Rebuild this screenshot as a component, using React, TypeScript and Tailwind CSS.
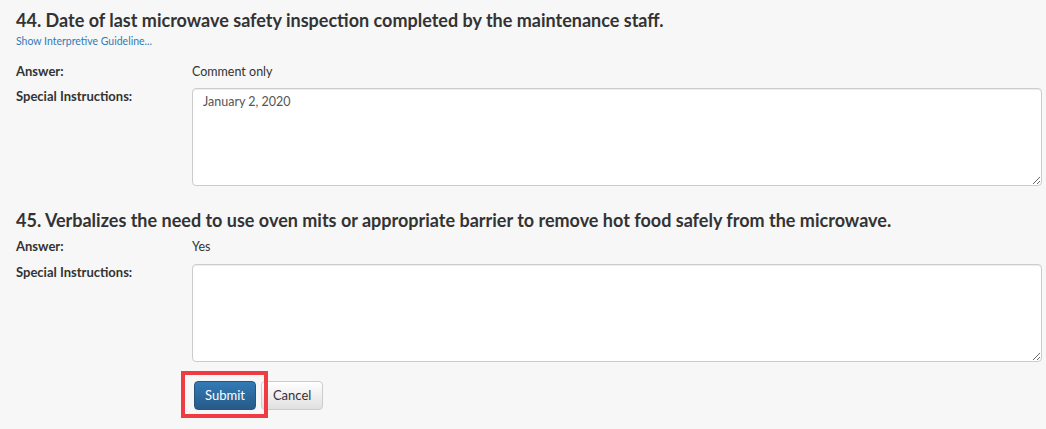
import React from 'react';

interface QuestionProps {
  number: number;
  title: string;
  answer: string;
  instructions?: string;
  showGuideline?: boolean;
  className?: string;
}

function Question({ number, title, answer, instructions = '', showGuideline, className = '' }: QuestionProps) {
  return (
    <div className={className}>
      <h2 className="text-[18px] leading-6 font-bold text-[#333]">
        {number}. {title}
      </h2>
      {showGuideline && (
        <a href="#" className="block mt-[2px] text-[10.5px] leading-[15px] text-[#337ab7]">
          Show Interpretive Guideline...
        </a>
      )}
      <div className={`grid grid-cols-[176px_1fr] leading-[17px] ${showGuideline ? 'mt-[14px]' : 'mt-[6px]'}`}>
        <div className="font-bold text-[13px]">Answer:</div>
        <div className="text-[12.5px]">{answer}</div>
        <div className={`font-bold text-[13px] ${showGuideline ? 'mt-2' : 'mt-[9px]'}`}>Special Instructions:</div>
        <textarea
          defaultValue={instructions}
          className={`h-[98px] w-full bg-white border border-[#ccc] rounded-[4px] px-[10px] py-1 text-[12.5px] leading-[17px] text-[#555] shadow-[inset_0_1px_1px_rgba(0,0,0,0.075)] outline-none ${showGuideline ? 'mt-2' : 'mt-[9px]'}`}
        />
      </div>
    </div>
  );
}

export default function App() {
  return (
    <div className="min-h-screen bg-[#f7f7f7] font-['Lato',sans-serif] text-[#333] pl-4 pr-1 pt-2">
      <Question
        number={44}
        title="Date of last microwave safety inspection completed by the maintenance staff."
        answer="Comment only"
        instructions="January 2, 2020"
        showGuideline
      />
      <Question
        number={45}
        title="Verbalizes the need to use oven mits or appropriate barrier to remove hot food safely from the microwave."
        answer="Yes"
        className="mt-[22px]"
      />
      <div className="flex gap-[5px] ml-[178px] mt-[19px]">
        <div className="relative">
          <button className="px-[10px] py-[5px] text-[13px] leading-[17px] text-white rounded-[4px] border border-[#245580] bg-gradient-to-b from-[#337ab7] to-[#265a88]">
            Submit
          </button>
          <div className="absolute -left-[13px] -top-[10px] w-[87px] h-[47px] border-[4px] border-[#ef3b42] pointer-events-none" />
        </div>
        <button className="px-[11px] py-[5px] text-[13px] leading-[17px] text-[#333] rounded-[4px] border border-[#ccc] bg-gradient-to-b from-white to-[#e0e0e0]">
          Cancel
        </button>
      </div>
    </div>
  );
}
